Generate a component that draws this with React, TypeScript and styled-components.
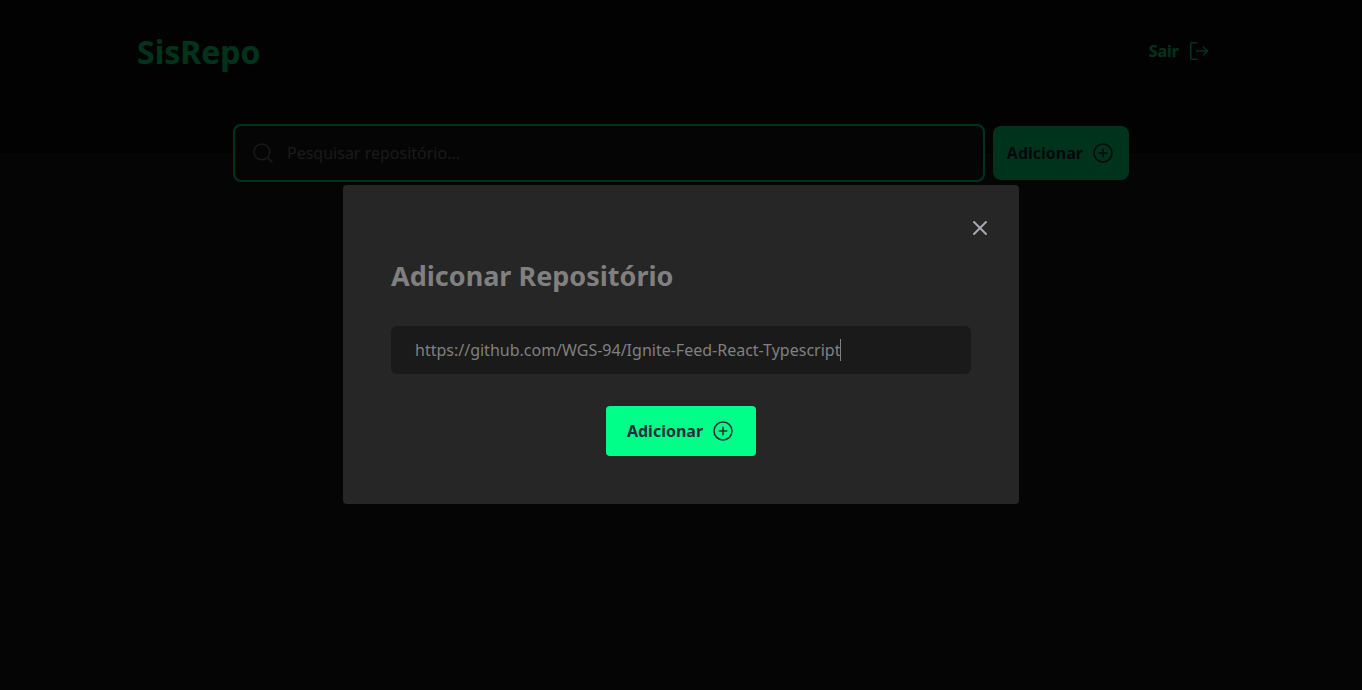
import React, { useLayoutEffect, useRef, useState } from "react";
import styled, { createGlobalStyle } from "styled-components";
import { PiPlusCircle } from "react-icons/pi";
import { X } from "lucide-react";

const GlobalStyle = createGlobalStyle`
  * {
    margin: 0;
    padding: 0;
    box-sizing: border-box;
  }

  body {
    background: #1a1a1a;
    color: #808080;
  }

  body, input, button {
    font-family: "Noto Sans", sans-serif;
    font-size: 16px;
    line-height: 22px;
  }

  button {
    border: 0;
    cursor: pointer;
  }
`;

const Header = styled.header`
  background: #0d0d0d;
  padding: 24px 24px 73px;
`;

const HeaderContent = styled.div`
  max-width: 1088px;
  margin: 0 auto;
  display: flex;
  align-items: flex-start;
  justify-content: space-between;
`;

const Logo = styled.h1`
  color: #00ff88;
  font-size: 32px;
  line-height: 56px;
`;

const Icon = styled.svg.attrs({ viewBox: "0 0 256 256" })`
  width: 24px;
  height: 24px;
  flex: none;
  fill: none;
  stroke: currentColor;
  stroke-width: 16;
  stroke-linecap: round;
  stroke-linejoin: round;
`;

const buttonColors = {
  solid: "#202048",
  ghost: "#00ff88",
  modal: "#2a2a3c",
};

const Button = styled.button<{ $variant: keyof typeof buttonColors }>`
  display: flex;
  align-items: center;
  justify-content: center;
  gap: 8px;
  height: ${({ $variant }) => ($variant === "modal" ? 50 : 54)}px;
  min-width: ${({ $variant }) => ($variant === "modal" ? 150 : 0)}px;
  padding: 0 14px;
  border-radius: ${({ $variant }) => ($variant === "modal" ? 4 : 8)}px;
  font-weight: 700;
  background: ${({ $variant }) =>
    $variant === "ghost" ? "transparent" : "#00ff88"};
  color: ${({ $variant }) => buttonColors[$variant]};
`;

const SearchForm = styled.form`
  width: 100%;
  max-width: 896px;
  margin: -29px auto 0;
  display: flex;
  align-items: center;
  gap: 8px;
`;

const SearchField = styled.label`
  flex: 1;
  display: flex;
  align-items: center;
  gap: 12px;
  height: 58px;
  padding: 0 16px;
  border: 2px solid #00ff88;
  border-radius: 8px;
  background: #1a1a1a;
  color: #808080;
`;

const SearchInput = styled.input`
  flex: 1;
  border: 0;
  outline: 0;
  background: transparent;
  color: inherit;

  &::placeholder {
    color: #808080;
    opacity: 1;
  }
`;

const Overlay = styled.div`
  position: fixed;
  inset: 0;
  display: flex;
  align-items: center;
  justify-content: center;
  padding: 24px 24px 25px;
  background: rgba(0, 0, 0, 0.8);
`;

const Dialog = styled.section`
  position: relative;
  width: 100%;
  max-width: 676px;
  padding: 71px 48px 48px;
  border-radius: 4px;
  background: #262626;
`;

const CloseButton = styled.button`
  position: absolute;
  top: 31px;
  right: 27px;
  display: flex;
  background: transparent;
  color: #a9a9b2;
`;

const DialogTitle = styled.h2`
  font-size: 27px;
  font-weight: 700;
  line-height: 40px;
`;

const RepoForm = styled.form`
  display: flex;
  flex-direction: column;
  align-items: center;
  gap: 32px;
  margin-top: 30px;
`;

const RepoField = styled.div`
  position: relative;
  width: 100%;
`;

const RepoInput = styled.input`
  display: block;
  width: 100%;
  height: 48px;
  padding: 0 24px;
  border: 0;
  outline: 0;
  border-radius: 6px;
  background: #1a1a1a;
  color: #808080;
  caret-color: transparent;
`;

const Caret = styled.span`
  position: absolute;
  top: 13px;
  width: 1px;
  height: 22px;
  background: #808080;
`;

export default function App() {
  const [search, setSearch] = useState("");
  const [url, setUrl] = useState(
    "https://github.com/WGS-94/Ignite-Feed-React-Typescript"
  );
  const [caretLeft, setCaretLeft] = useState(24);
  const inputRef = useRef<HTMLInputElement>(null);

  useLayoutEffect(() => {
    const context = document.createElement("canvas").getContext("2d");
    if (!context || !inputRef.current) return;
    const style = getComputedStyle(inputRef.current);
    context.font = `${style.fontSize} ${style.fontFamily}`;
    setCaretLeft(
      parseInt(style.paddingLeft, 10) +
        Math.round(context.measureText(url).width)
    );
  }, [url]);

  return (
    <>
      <GlobalStyle />
      <Header>
        <HeaderContent>
          <Logo>SisRepo</Logo>
          <Button $variant="ghost" type="button">
            Sair
            <Icon aria-hidden="true">
              <polyline points="174 86 216 128 174 170" />
              <line x1="104" y1="128" x2="216" y2="128" />
              <path d="M104 216H48a8 8 0 0 1-8-8V48a8 8 0 0 1 8-8h56" />
            </Icon>
          </Button>
        </HeaderContent>
      </Header>
      <main>
        <SearchForm onSubmit={(event) => event.preventDefault()}>
          <SearchField>
            <Icon aria-hidden="true">
              <circle cx="116" cy="116" r="84" />
              <line x1="175.4" y1="175.4" x2="224" y2="224" />
            </Icon>
            <SearchInput
              type="text"
              aria-label="Pesquisar repositório"
              placeholder="Pesquisar repositório..."
              value={search}
              onChange={(event) => setSearch(event.target.value)}
            />
          </SearchField>
          <Button $variant="solid" type="button">
            Adicionar
            <PiPlusCircle size={24} />
          </Button>
        </SearchForm>
      </main>
      <Overlay>
        <Dialog role="dialog" aria-modal="true" aria-labelledby="dialog-title">
          <CloseButton type="button" aria-label="Fechar">
            <X size={24} />
          </CloseButton>
          <DialogTitle id="dialog-title">Adiconar Repositório</DialogTitle>
          <RepoForm onSubmit={(event) => event.preventDefault()}>
            <RepoField>
              <RepoInput
                ref={inputRef}
                type="text"
                aria-labelledby="dialog-title"
                spellCheck={false}
                value={url}
                onChange={(event) => setUrl(event.target.value)}
              />
              <Caret style={{ left: caretLeft }} />
            </RepoField>
            <Button $variant="modal" type="submit">
              Adicionar
              <PiPlusCircle size={24} />
            </Button>
          </RepoForm>
        </Dialog>
      </Overlay>
    </>
  );
}
